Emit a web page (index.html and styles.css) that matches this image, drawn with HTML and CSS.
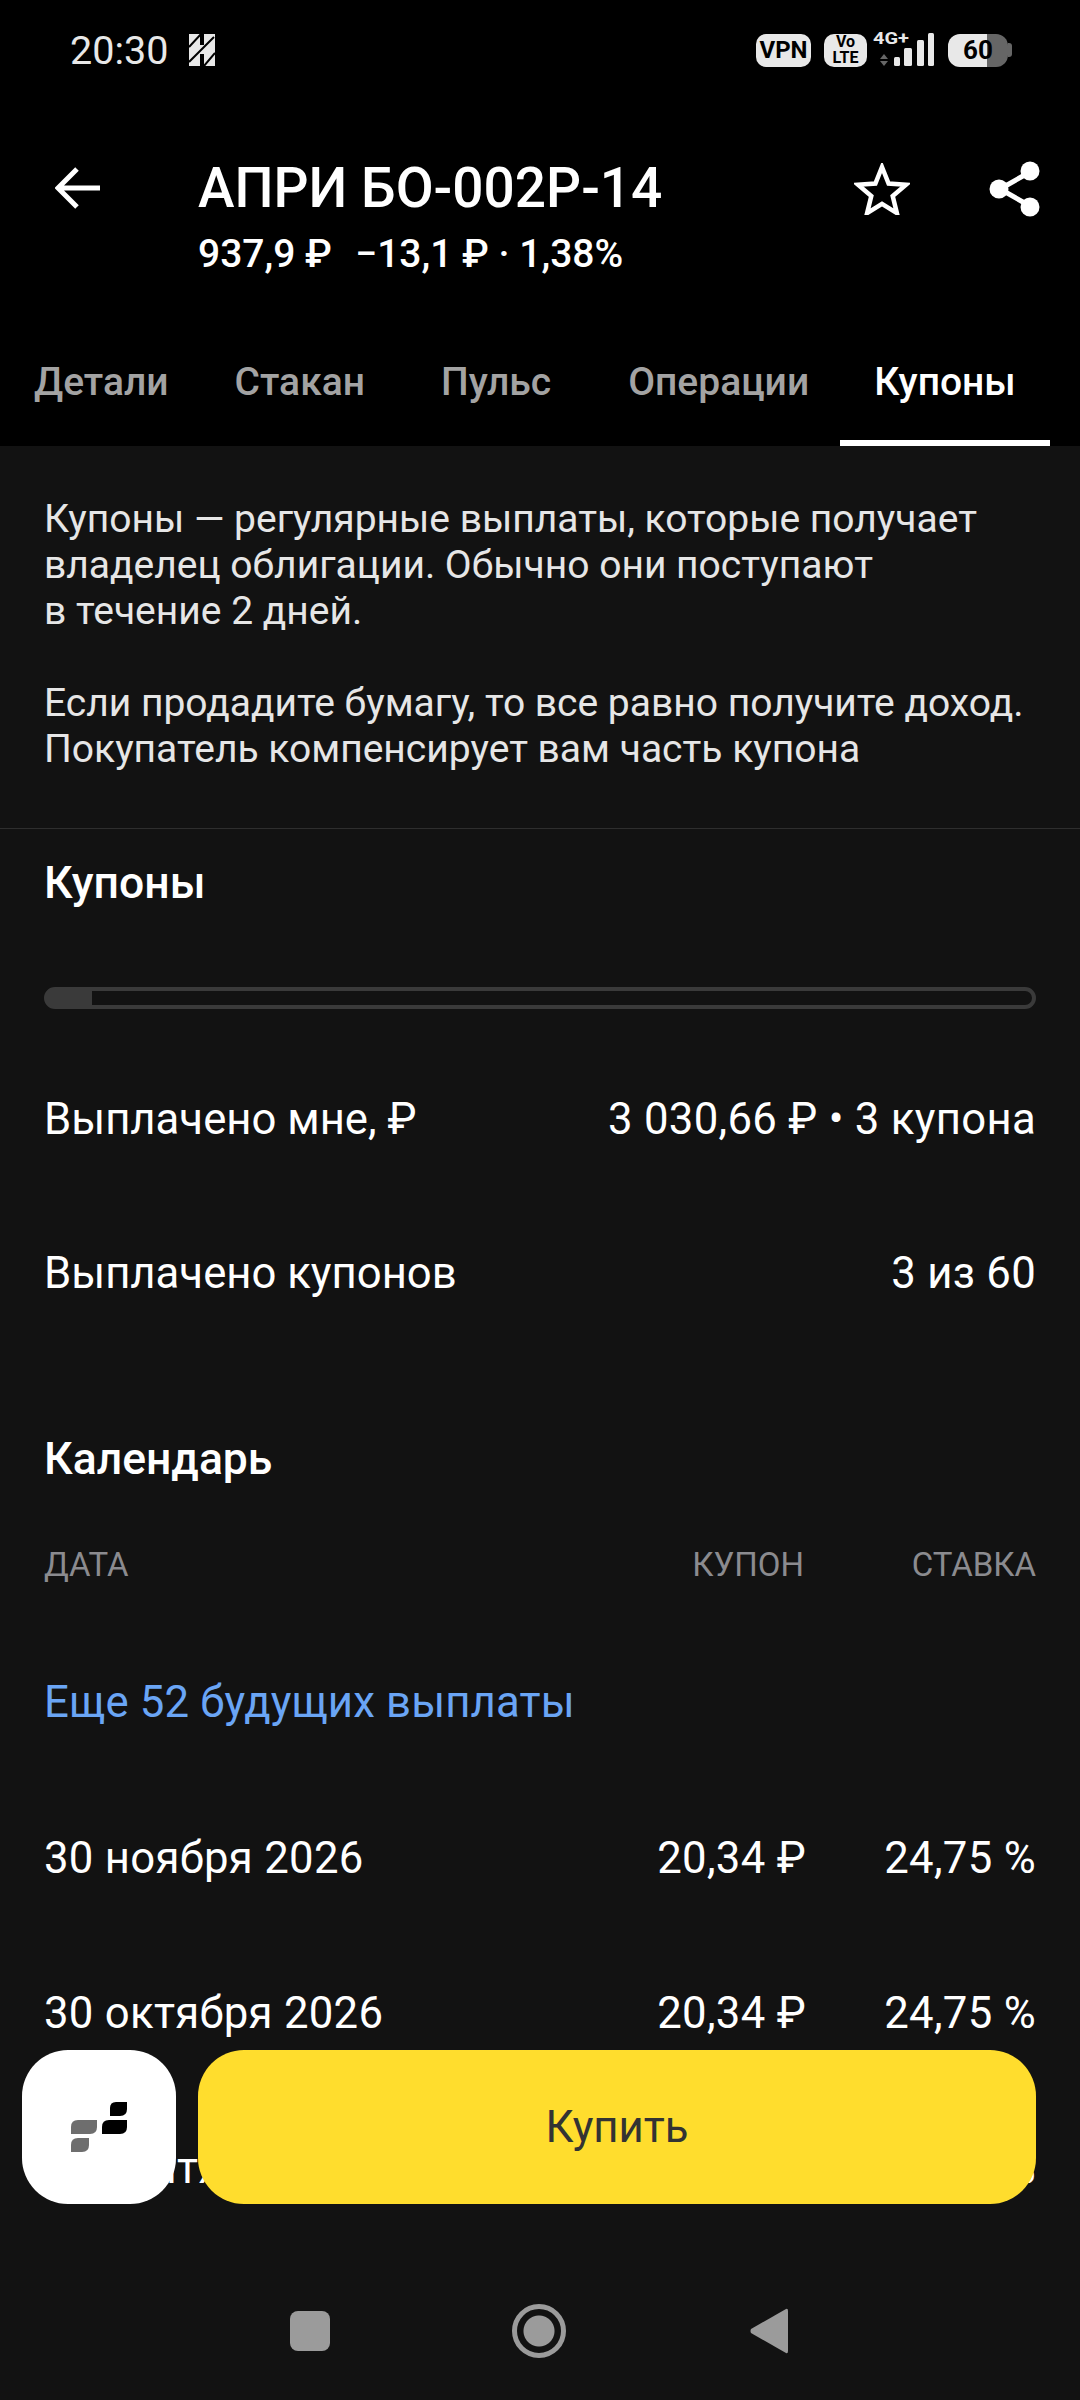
FILE: index.html
```html
<!DOCTYPE html>
<html lang="ru">
<head>
  <meta charset="UTF-8">
  <meta name="viewport" content="width=device-width, initial-scale=1.0">
  <title>АПРИ БО-002Р-14</title>
  <link rel="stylesheet" href="styles.css">
</head>
<body>
  <div class="screen">
    <header class="top">
      <div class="status">
        <div class="status-left">
          <span class="time">20:30</span>
          <svg class="h-icon" width="26" height="32" viewBox="0 0 26 32">
            <path d="M0 0h11v11h4V0h11v32H15V20h-4v12H0z" fill="#e8e8e8"/>
            <path d="M0 13 12 0M0 28 25 3M15 32 26 19" stroke="#000" stroke-width="2" fill="none"/>
          </svg>
        </div>
        <div class="status-right">
          <span class="pill pill-vpn">VPN</span>
          <span class="pill pill-volte">Vo<br>LTE</span>
          <svg class="signal" width="62" height="34" viewBox="0 0 62 34">
            <text x="0" y="11" class="signal-text" textLength="36" lengthAdjust="spacingAndGlyphs">4G+</text>
            <path d="M11 21l4 5H7zM11 33l4-5H7z" fill="#666"/>
            <rect x="21" y="24" width="6" height="9" rx="1.5" fill="#e8e8e8"/>
            <rect x="31" y="15" width="8" height="18" rx="1.5" fill="#e8e8e8"/>
            <rect x="44" y="7" width="7" height="26" rx="1.5" fill="#e8e8e8"/>
            <rect x="55" y="0" width="6" height="33" rx="1.5" fill="#e8e8e8"/>
          </svg>
          <div class="battery-wrap">
            <div class="battery"><span>60</span></div>
            <span class="battery-nub"></span>
          </div>
        </div>
      </div>

      <div class="head">
        <svg class="icon-back" width="46" height="42" viewBox="0 0 46 42">
          <path d="M45 21H3M22 2 3 21l19 19" stroke="#fff" stroke-width="5" fill="none"/>
        </svg>
        <div class="head-text">
          <h1>АПРИ БО-002Р-14</h1>
          <p>937,9 ₽ &nbsp;<span class="change">−13,1 ₽ · 1,38%</span></p>
        </div>
        <svg class="icon-star" width="56" height="52" viewBox="0 0 56 52">
          <path d="M28 4l6.600 16.500 17.400 1.300-13.300 11.300 4.200 17-14.900-9.300-14.900 9.300 4.200-17L4 21.800l17.400-1.300z" stroke="#fff" stroke-width="4.500" fill="none"/>
        </svg>
        <svg class="icon-share" width="52" height="56" viewBox="0 0 52 56">
          <path d="M41 11 11 28l30 17" stroke="#fff" stroke-width="5" fill="none"/>
          <circle cx="41" cy="10" r="9.500" fill="#fff"/>
          <circle cx="10" cy="28" r="9.500" fill="#fff"/>
          <circle cx="41" cy="46" r="9.500" fill="#fff"/>
        </svg>
      </div>

      <nav class="tabs">
        <a class="tab">Детали</a>
        <a class="tab">Стакан</a>
        <a class="tab">Пульс</a>
        <a class="tab">Операции</a>
        <a class="tab tab-active">Купоны</a>
      </nav>
    </header>

    <main class="content">
      <section class="intro">
        <p>Купоны — регулярные выплаты, которые получает<br>владелец облигации. Обычно они поступают<br>в течение 2 дней.</p>
        <p>Если продадите бумагу, то все равно получите доход.<br>Покупатель компенсирует вам часть купона</p>
      </section>

      <section class="coupons">
        <h2>Купоны</h2>
        <div class="progress"><div class="progress-fill" style="width: 4.5%"></div></div>
        <div class="row"><span>Выплачено мне, ₽</span><span class="num">3 030,66 ₽ • 3 купона</span></div>
        <div class="row"><span>Выплачено купонов</span><span class="num">3 из 60</span></div>
      </section>

      <section class="calendar">
        <h2>Календарь</h2>
        <div class="cal-head">
          <span class="cal-date">ДАТА</span>
          <span class="cal-sum">КУПОН</span>
          <span class="cal-rate">СТАВКА</span>
        </div>
        <div class="row cal-more">Еще 52 будущих выплаты</div>
        <div class="row cal-row num">
          <span class="cal-date">30 ноября 2026</span>
          <span class="cal-sum">20,34 ₽</span>
          <span class="cal-rate">24,75 %</span>
        </div>
        <div class="row cal-row num">
          <span class="cal-date">30 октября 2026</span>
          <span class="cal-sum">20,34 ₽</span>
          <span class="cal-rate">24,75 %</span>
        </div>
        <div class="row cal-row num">
          <span class="cal-date">30 сентября 2026</span>
          <span class="cal-sum">20,34 ₽</span>
          <span class="cal-rate">24,75 %</span>
        </div>
      </section>
    </main>

    <div class="actions">
      <button class="btn-logo">
        <svg width="56" height="50" viewBox="0 0 56 50">
          <path d="M7 18h19v7q0 7-7 7H0v-7q0-7 7-7z" fill="#6e6e6e"/>
          <path d="M7 36h11v7q0 7-7 7H0v-7q0-7 7-7z" fill="#6e6e6e"/>
          <path d="M45 0h11v7q0 7-7 7H39V6q0-6 6-6z" fill="#000"/>
          <path d="M38 18h18v7q0 7-7 7H31v-7q0-7 7-7z" fill="#000"/>
        </svg>
      </button>
      <button class="btn-buy">Купить</button>
    </div>

    <div class="navbar">
      <span class="nav-square"></span>
      <span class="nav-circle"></span>
      <svg width="38" height="46" viewBox="0 0 38 46">
        <path d="M36 1q2-1 2 2v40q0 3-2 2L1 25q-1-2 0-4z" fill="#9b9b9b"/>
      </svg>
    </div>
  </div>
</body>
</html>
```

FILE: styles.css
```css
* {
  box-sizing: border-box;
}
body {
  margin: 0;
  background-color: #121212;
  font-family: Roboto, "Noto Sans", sans-serif;
  color: #fff;
}
h1, h2, p {
  margin: 0;
}
.screen {
  position: relative;
  width: 1080px;
  height: 2400px;
  overflow: hidden;
}

/* шапка */
.top {
  background-color: #000;
}
.status {
  display: flex;
  justify-content: space-between;
  align-items: center;
  height: 100px;
  padding: 0 68px 0 70px;
  color: #e8e8e8;
}
.status-left {
  display: flex;
  align-items: center;
  gap: 21px;
}
.time {
  font-size: 39.500px;
}
.status-right {
  display: flex;
  align-items: center;
  gap: 13px;
}
.pill {
  display: flex;
  align-items: center;
  justify-content: center;
  background-color: #e8e8e8;
  color: #000;
  font-weight: 700;
  text-align: center;
  border-radius: 10px;
  height: 33px;
}
.pill-vpn {
  width: 55px;
  font-size: 24px;
}
.pill-volte {
  width: 43px;
  font-size: 16px;
  line-height: 16px;
}
.signal {
  margin-left: -7px;
  overflow: visible;
}
.signal-text {
  font-family: Roboto, sans-serif;
  font-size: 16px;
  font-weight: 700;
  fill: #e8e8e8;
}
.battery-wrap {
  display: flex;
  align-items: center;
}
.battery {
  display: flex;
  align-items: center;
  justify-content: center;
  width: 60px;
  height: 33px;
  border-radius: 12px;
  background: linear-gradient(to right, #e8e8e8 65%, #666 65%);
  color: #000;
  font-size: 26px;
  font-weight: 700;
}
.battery-nub {
  width: 4px;
  height: 14px;
  border-radius: 0 3px 3px 0;
  background-color: #666;
}
.head {
  display: flex;
  align-items: flex-start;
  height: 230px;
  padding-top: 58px;
}
.icon-back {
  margin: 9px 0 0 55px;
  flex: none;
}
.head-text {
  margin-left: 97px;
  flex: 1;
}
h1 {
  font-size: 55px;
  font-weight: 500;
  line-height: 60px;
}
.head-text p {
  margin-top: 13px;
  font-size: 39px;
  font-weight: 500;
  line-height: 46px;
}
.change {
  margin-left: 4px;
}
.icon-star {
  margin: 5px 0 0;
  flex: none;
}
.icon-share {
  margin: 3px 39px 0 79px;
  flex: none;
}
.tabs {
  display: flex;
  height: 116px;
}
.tab {
  padding: 26px 34px 0;
  height: 116px;
  font-size: 39px;
  font-weight: 500;
  line-height: 52px;
  color: #a3a3a3;
}
.tab:nth-child(2) {
  margin-left: -2px;
}
.tab:nth-child(3) {
  margin-left: 8px;
}
.tab:nth-child(4) {
  margin-left: 9px;
}
.tab:nth-child(5) {
  margin-left: -3px;
}
.tab-active {
  color: #fff;
  border-bottom: 6px solid #fff;
}

/* контент */
.content {
  background-color: #121212;
}
.intro {
  padding: 50px 44px 56px;
  border-bottom: 1px solid #2e2e2e;
  font-size: 39px;
  line-height: 46px;
  color: #e6e6e6;
}
.intro p + p {
  margin-top: 46px;
}
.coupons, .calendar {
  padding: 0 44px;
}
.coupons {
  padding-top: 29px;
}
h2 {
  font-size: 44.500px;
  font-weight: 500;
  line-height: 50px;
}
.progress {
  height: 22px;
  margin: 79px 0 33px;
  border: 4px solid #3a3a3a;
  border-radius: 11px;
}
.progress-fill {
  height: 100%;
  background-color: #3a3a3a;
}
.row {
  display: flex;
  justify-content: space-between;
  align-items: center;
  height: 154px;
  font-size: 43.700px;
}
.num {
  letter-spacing: 0.3px;
}
.calendar {
  padding-top: 84px;
}
.cal-head {
  display: flex;
  align-items: center;
  height: 46px;
  margin: 57px 0 38px;
  font-size: 33px;
  color: #8b8b8f;
}
.cal-date {
  flex: 1;
}
.cal-sum {
  text-align: right;
}
.cal-row .cal-sum {
  margin-right: -2px;
}
.cal-rate {
  width: 232px;
  text-align: right;
}
.cal-more {
  margin-bottom: 1px;
  letter-spacing: 0.15px;
  color: #6aa5f5;
}
.cal-row {
  height: 155px;
}

/* кнопки поверх списка */
.actions {
  position: absolute;
  left: 22px;
  top: 2050px;
  width: 1014px;
  display: flex;
  gap: 22px;
}
.actions button {
  height: 154px;
  border: none;
  font-family: inherit;
}
.btn-logo {
  flex: none;
  width: 154px;
  border-radius: 46px;
  background-color: #fff;
  display: flex;
  align-items: center;
  justify-content: center;
  padding: 0;
}
.btn-buy {
  flex: 1;
  border-radius: 46px;
  background-color: #ffdd2d;
  color: #333;
  font-size: 43.700px;
}
.navbar {
  position: absolute;
  left: 0;
  top: 2204px;
  width: 1080px;
  height: 196px;
  padding: 104px 0 0 290px;
  background-color: #121212;
  display: flex;
  align-items: flex-start;
}
.nav-square {
  width: 40px;
  height: 40px;
  margin-top: 3px;
  border-radius: 8px;
  background-color: #9b9b9b;
}
.nav-circle {
  width: 54px;
  height: 54px;
  margin: -4px 0 0 182px;
  border: 5px solid #9b9b9b;
  border-radius: 50%;
  background: radial-gradient(circle, #9b9b9b 0 15px, transparent 16px);
}
.navbar svg {
  margin: 0 0 0 184px;
}
```
